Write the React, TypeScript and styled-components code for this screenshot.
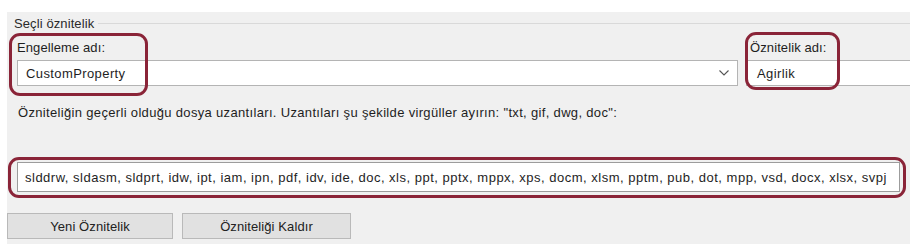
import React from "react";
import styled, { createGlobalStyle } from "styled-components";

const Global = createGlobalStyle`
  html, body { margin: 0; padding: 0; background: #ffffff; }
  body {
    font-family: "Liberation Sans", Arial, sans-serif;
    font-size: 13px;
    letter-spacing: 0.1px;
    color: #1e1e1e;
  }
`;

const ACCENT = "#8a2438";

const Page = styled.div`
  width: 910px;
  height: 252px;
  padding: 12px 0 0 7px;
  box-sizing: border-box;
  overflow: hidden;
`;

const Panel = styled.div`
  background: #f0f0f0;
  height: 232px;
  display: flex;
  flex-direction: column;
  overflow: hidden;
`;

const GroupHeader = styled.div`
  display: flex;
  align-items: center;
  height: 22px;
  padding-left: 7px;
`;

const GroupTitle = styled.span`
  color: #2a2a2a;
  white-space: nowrap;
`;

const GroupLine = styled.div`
  flex: 1;
  height: 0;
  border-top: 1px solid #d9d9d9;
  margin-left: 4px;
`;

const FieldsRow = styled.div`
  display: flex;
  gap: 8px;
  padding: 6px 0 0 10px;
`;

const Field = styled.div<{ $width: number }>`
  position: relative;
  display: flex;
  flex-direction: column;
  gap: 4px;
  width: ${(p) => p.$width}px;
  flex-shrink: 0;
`;

const Label = styled.label<{ $indent?: number }>`
  height: 16px;
  line-height: 16px;
  padding-left: ${(p) => p.$indent ?? 0}px;
  white-space: nowrap;
`;

const Input = styled.div<{ $pad?: number }>`
  height: 26px;
  box-sizing: border-box;
  background: #ffffff;
  border: 1px solid #b4b4b4;
  display: flex;
  align-items: center;
  padding-left: ${(p) => p.$pad ?? 8}px;
  padding-right: 6px;
  white-space: nowrap;
  overflow: hidden;
  letter-spacing: 0.4px;
`;

const InputText = styled.span`
  flex: 1;
`;

const Chevron = styled.svg`
  width: 10px;
  height: 6px;
  flex-shrink: 0;
  margin-right: 2px;
`;

const Highlight = styled.div<{ $l: number; $t: number; $w: number; $h: number }>`
  position: absolute;
  left: ${(p) => p.$l}px;
  top: ${(p) => p.$t}px;
  width: ${(p) => p.$w}px;
  height: ${(p) => p.$h}px;
  box-sizing: border-box;
  border: 3px solid ${ACCENT};
  border-radius: 11px;
  pointer-events: none;
`;

const Description = styled.div`
  margin-top: 19px;
  padding-left: 11px;
  height: 16px;
  line-height: 16px;
  white-space: nowrap;
  letter-spacing: 0.33px;
`;

const ExtBox = styled.div`
  margin: 36px 0 0 1px;
  width: 898px;
  box-sizing: border-box;
  border: 3px solid ${ACCENT};
  border-radius: 11px;
  padding: 2px 3px 3px 6px;
`;

const ExtInput = styled(Input)`
  height: 30px;
  padding-left: 7px;
  border-color: #9c9c9c;
  letter-spacing: 0.5px;
`;

const Buttons = styled.div`
  display: flex;
  gap: 9px;
  margin-top: 15px;
`;

const Button = styled.button<{ $width: number }>`
  width: ${(p) => p.$width}px;
  height: 26px;
  background: #e1e1e1;
  border: 1px solid #b9b9b9;
  font-family: inherit;
  font-size: 13px;
  letter-spacing: 0.1px;
  color: #222;
  padding: 0;
`;

export default function App() {
  return (
    <>
      <Global />
      <Page>
        <Panel>
          <GroupHeader>
            <GroupTitle>Seçli öznitelik</GroupTitle>
            <GroupLine />
          </GroupHeader>
          <FieldsRow>
            <Field $width={721}>
              <Label>Engelleme adı:</Label>
              <Input>
                <InputText>CustomProperty</InputText>
                <Chevron viewBox="0 0 10 6">
                  <polyline points="0.5,0.5 5,5 9.5,0.5" fill="none" stroke="#555" strokeWidth="1.1" />
                </Chevron>
              </Input>
              <Highlight $l={-8} $t={-7} $w={139} $h={63} />
            </Field>
            <Field $width={200}>
              <Label $indent={4}>Öznitelik adı:</Label>
              <Input $pad={10}>
                <InputText>Agirlik</InputText>
              </Input>
              <Highlight $l={-1} $t={-8} $w={95} $h={58} />
            </Field>
          </FieldsRow>
          <Description>
            Özniteliğin geçerli olduğu dosya uzantıları. Uzantıları şu şekilde virgüller ayırın: "txt, gif, dwg, doc":
          </Description>
          <ExtBox>
            <ExtInput>
              <InputText>
                slddrw, sldasm, sldprt, idw, ipt, iam, ipn, pdf, idv, ide, doc, xls, ppt, pptx, mppx, xps, docm, xlsm, pptm, pub, dot, mpp, vsd, docx, xlsx, svpj
              </InputText>
            </ExtInput>
          </ExtBox>
          <Buttons>
            <Button $width={166}>Yeni Öznitelik</Button>
            <Button $width={169}>Özniteliği Kaldır</Button>
          </Buttons>
        </Panel>
      </Page>
    </>
  );
}
